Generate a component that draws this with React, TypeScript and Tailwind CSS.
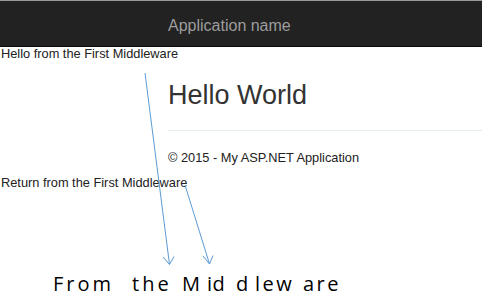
export default function App() {
  return (
    <div className="relative h-[305px] w-[482px] overflow-hidden bg-white font-['Liberation_Sans',Arial,sans-serif] text-[#333]">
      <header className="border-t border-b border-t-[#9a9a9a] border-b-[#080808] bg-[#222]">
        <div className="h-[45px] pl-[168px] pt-[17px] text-[16px] leading-[16px] text-[#9d9d9d]">
          Application name
        </div>
      </header>

      <p className="pl-px text-[12.8px] leading-[14px] text-[#222]">Hello from the First Middleware</p>

      <main className="mt-[21px] pl-[168px]">
        <h2 className="text-[27px] leading-[27px]">Hello World</h2>
        <hr className="mt-[21px] border-[#e4eeee]" />
        <footer className="mt-[20px] text-[12.8px] leading-[14px] text-[#222]">
          © 2015 - My ASP.NET Application
        </footer>
      </main>

      <p className="mt-[11px] pl-px text-[12.8px] leading-[14px] text-[#222]">Return from the First Middleware</p>

      {/* screenshot caption, spaced out the way it was typed */}
      <div className="mt-[84px] flex pl-[53px] font-['Open_Sans',sans-serif] text-[20px] font-medium leading-[20px] whitespace-pre text-black">
        <span className="w-[79px] tracking-[3px]">From</span>
        <span className="w-[50px] tracking-[3px]">the</span>
        <span className="w-[25px]">M</span>
        <span className="w-[29px] tracking-[0.5px]">id</span>
        <span className="w-[19px]">d</span>
        <span className="w-[48px] tracking-[2.5px]">lew</span>
        <span className="tracking-[2.5px]">are</span>
      </div>

      <svg
        className="pointer-events-none absolute inset-0"
        width="482"
        height="305"
        viewBox="0 0 482 305"
        fill="none"
        stroke="#5b9bd5"
        strokeWidth="1"
      >
        <path d="M145 73 L169.5 264.5 M163 257 L169.5 264.5 L174 256.5" />
        <path d="M185 185 L209.5 264 M203 256 L209.5 264 L213 255.5" />
      </svg>
    </div>
  );
}
